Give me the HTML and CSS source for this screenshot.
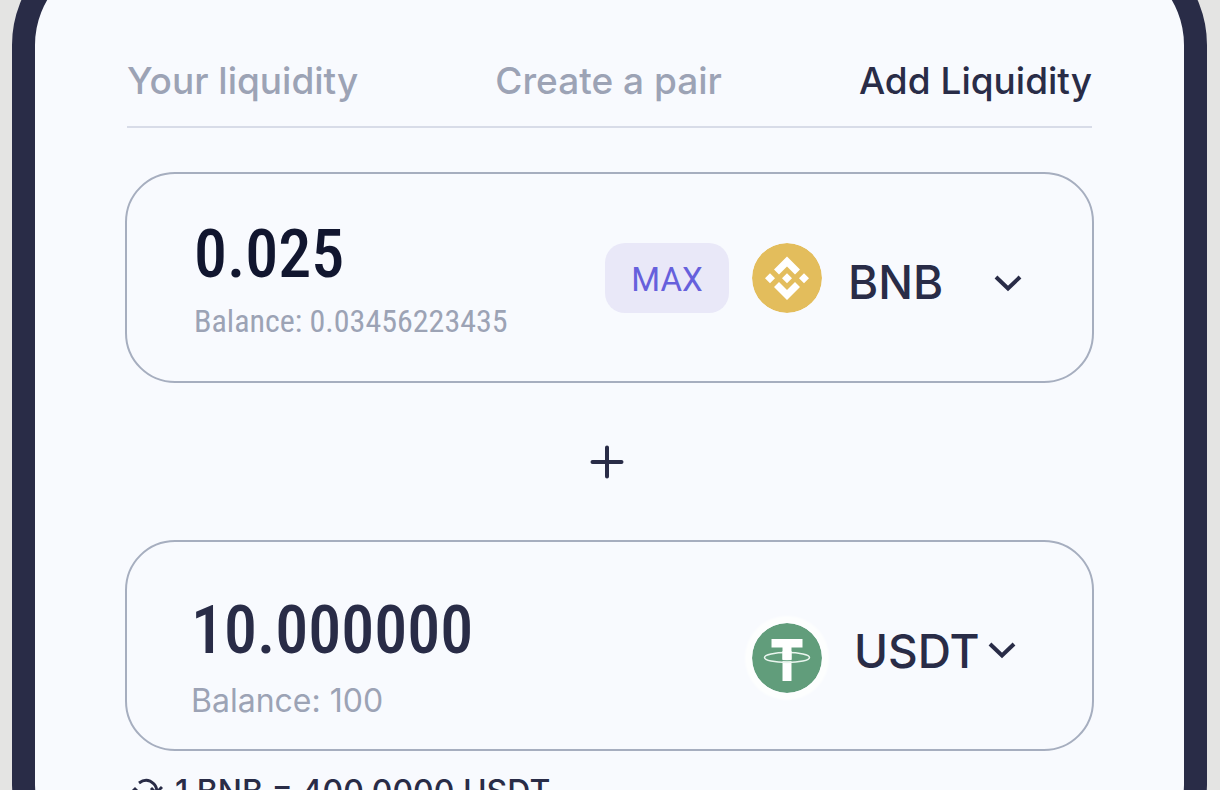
FILE: index.html
```html
<!DOCTYPE html>
<html lang="en">
<head>
    <meta charset="UTF-8">
    <meta name="viewport" content="width=device-width, initial-scale=1.0">
    <title>Add Liquidity</title>
    <link rel="stylesheet" href="styles.css">
</head>
<body>
    <main class="phone">
        <nav class="tabs">
            <a href="#liquidity">Your liquidity</a>
            <a href="#create">Create a pair</a>
            <a href="#add" class="active">Add Liquidity</a>
        </nav>
        <form class="pair">
            <div class="card">
                <div class="amount">
                    <input type="text" id="bnbAmount" class="value" value="0.025" inputmode="decimal" aria-label="BNB amount">
                    <label for="bnbAmount" class="balance narrow">Balance: 0.03456223435</label>
                </div>
                <button type="button" class="max">MAX</button>
                <div class="token">
                    <svg class="logo" viewBox="0 0 70 70" aria-hidden="true">
                        <circle cx="35" cy="35" r="35" fill="#e3bd5c"/>
                        <g fill="#fff">
                            <path d="M35 13.5 48 26.5 43 31.5 35 23.5 27 31.5 22 26.5z"/>
                            <path d="M35 57 48 44 43 39 35 47 27 39 22 44z"/>
                            <path d="M13 35.2 18 30.2 23 35.2 18 40.2z"/>
                            <path d="M47 35.2 52 30.2 57 35.2 52 40.2z"/>
                            <path d="M30 35.2 35 30.2 40 35.2 35 40.2z"/>
                        </g>
                    </svg>
                    <div class="picker">
                        <select aria-label="First token">
                            <option>BNB</option>
                            <option>USDT</option>
                        </select>
                        <svg class="chevron" viewBox="0 0 28 18" aria-hidden="true"><path d="M2 3 14 14.5 26 3"/></svg>
                    </div>
                </div>
            </div>
            <svg class="plus" viewBox="0 0 34 34" aria-hidden="true"><path d="M17 2.5V31.5M2.5 17H31.5"/></svg>
            <div class="card output">
                <div class="amount">
                    <input type="text" id="usdtAmount" class="value" value="10.000000" inputmode="decimal" aria-label="USDT amount">
                    <label for="usdtAmount" class="balance">Balance: 100</label>
                </div>
                <div class="token">
                    <svg class="logo" viewBox="0 0 70 70" aria-hidden="true">
                        <circle cx="35" cy="35" r="35" fill="#619d7b"/>
                        <path d="M19.5 16H50.5V24.5H39.5V58H30.5V24.5H19.5z" fill="#fff"/>
                        <ellipse cx="35" cy="34.5" rx="22.5" ry="5" fill="none" stroke="#e9f5ee" stroke-width="1.5"/>
                        <path d="M30.5 28H39.5V36.5H30.5z" fill="#fff"/>
                        <path d="M29 37.5Q35 38 41 37.5" fill="none" stroke="#619d7b" stroke-width="1"/>
                    </svg>
                    <div class="picker">
                        <select aria-label="Second token">
                            <option>USDT</option>
                            <option>BNB</option>
                        </select>
                        <svg class="chevron" viewBox="0 0 28 18" aria-hidden="true"><path d="M2 3 14 14.5 26 3"/></svg>
                    </div>
                </div>
            </div>
        </form>
        <p class="rate">
            <svg class="swap" viewBox="0 0 34 34" aria-hidden="true">
                <path d="M10 8Q18 2 25 9Q28 12 28 18M22 13 27 18 33 12M25 29Q17 35 10 28Q7 25 7 18M2 18 6 14 10 18"/>
            </svg>
            1 BNB = 400.0000 USDT
        </p>
    </main>
</body>
</html>
```
FILE: styles.css
```css
* {
    box-sizing: border-box;
}
body {
    margin: 0;
    background-color: #e4e4e3;
    color: #292c47;
    font-family: Inter, "Liberation Sans", sans-serif;
    overflow: hidden;
}
/* the top of the frame runs off the screen */
.phone {
    margin: -67px 13px 0 12px;
    padding: 102px 90px 60px;
    background-color: #f8fafe;
    border: 23px solid #292c47;
    border-radius: 112px;
}
.tabs {
    display: flex;
    justify-content: space-between;
    margin: 0 2px 44px;
    padding-bottom: 22px;
    border-bottom: 2px solid #d8dce8;
    font-size: 37px;
    line-height: 46px;
    font-weight: 500;
}
.tabs a {
    color: #9ca3b5;
    text-decoration: none;
}
.tabs .active {
    color: #292c47;
}
.card {
    display: flex;
    align-items: center;
    height: 211px;
    padding: 0 70px 0 67px;
    border: 2px solid #a6aebf;
    border-radius: 50px;
}
.amount {
    flex: 1;
    min-width: 0;
    padding-top: 8px;
}
.value {
    display: block;
    width: 100%;
    height: 68px;
    padding: 0;
    border: 0;
    outline: 0;
    background: none;
    color: #11162f;
    font-family: "Roboto Condensed", Roboto, sans-serif;
    font-size: 66px;
    font-weight: 500;
}
.balance {
    display: block;
    margin-top: 10px;
    color: #9ca3b5;
    font-size: 32px;
    line-height: 44px;
    white-space: nowrap;
}
.narrow {
    font-family: "Roboto Condensed", Roboto, sans-serif;
}
.max {
    width: 124px;
    height: 70px;
    margin-right: 23px;
    padding: 4px 0 0;
    border: 0;
    border-radius: 20px;
    background-color: #e9e8f8;
    color: #6660dc;
    font-family: Roboto, sans-serif;
    font-size: 33px;
    cursor: pointer;
}
.token {
    display: flex;
    align-items: center;
    gap: 26px;
    width: 270px;
}
.logo {
    flex: none;
    width: 70px;
    height: 70px;
    border-radius: 50%;
}
.picker {
    position: relative;
    flex: 1;
    padding-top: 8px;
}
.picker select {
    display: block;
    width: 100%;
    height: 56px;
    padding: 0;
    border: 0;
    appearance: none;
    background: none;
    color: #292c47;
    font-family: Inter, "Liberation Sans", sans-serif;
    font-size: 46px;
    font-weight: 500;
    cursor: pointer;
}
.chevron {
    position: absolute;
    right: 0;
    top: 28px;
    width: 28px;
    height: 18px;
    pointer-events: none;
}
.chevron path,
.plus path,
.swap path {
    fill: none;
    stroke: #292c47;
    stroke-width: 4;
}
.plus {
    display: block;
    width: 34px;
    height: 34px;
    margin: 62px 0 61px 48%;
}
.plus path {
    stroke-linecap: round;
}
.output {
    padding: 0 76px 0 64px;
}
.output .amount {
    padding-top: 28px;
}
.output .value {
    color: #292c47;
}
.output .balance {
    margin-top: 14px;
}
.output .token {
    gap: 32px;
    width: 264px;
    padding-top: 24px;
}
.output .logo {
    box-shadow: 0 0 2px 7px #fdfefe;
}
.output .picker {
    padding: 0 0 14px;
}
.output .chevron {
    top: 18px;
}
.rate {
    display: flex;
    align-items: center;
    gap: 12px;
    margin: 19px 4px 0;
    font-size: 32px;
    line-height: 44px;
    font-weight: 500;
}
.swap {
    width: 34px;
    height: 34px;
}
.swap path {
    stroke-width: 3;
}
```
